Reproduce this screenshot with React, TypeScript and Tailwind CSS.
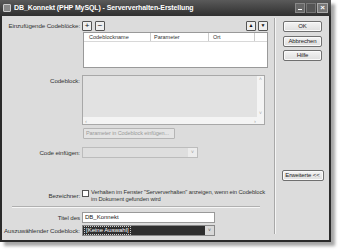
import type { ReactNode } from 'react';

function Btn({ children, className = '' }: { children: ReactNode; className?: string }) {
  return (
    <div
      className={`flex items-center justify-center whitespace-nowrap rounded-[2px] border border-[#6f6f6f] bg-gradient-to-b from-[#f4f4f4] to-[#dedede] text-[6px] tracking-[-0.1px] text-[#222] shadow-[inset_0_0_0_1px_#fafafa] ${className}`}
    >
      {children}
    </div>
  );
}

function Small({ children }: { children: ReactNode }) {
  return (
    <div className="flex h-[10px] w-[10px] items-center justify-center rounded-[1px] border border-[#555] bg-[#eee] text-[8px] leading-none text-[#111]">
      {children}
    </div>
  );
}

function Label({ children, className = '' }: { children: ReactNode; className?: string }) {
  return (
    <div className={`w-[80px] shrink-0 whitespace-nowrap pr-[2px] text-right text-[6.2px] tracking-[-0.1px] text-[#333] ${className}`}>
      {children}
    </div>
  );
}

export default function App() {
  return (
    <div className="h-[250px] w-[338px] bg-white" style={{ fontFamily: '"Liberation Sans", Arial, sans-serif' }}>
      <div className="flex h-[242px] w-[331px] flex-col border-2 border-t-0 border-[#2a2a2a] bg-[#dcdcdc] shadow-[4px_4px_3px_rgba(0,0,0,0.35)]">
        {/* title bar */}
        <div className="-mx-[2px] flex h-[16px] items-center bg-gradient-to-b from-[#5a5a5a] to-[#303030] px-[3px]">
          <div className="mr-[3px] h-[8px] w-[8px] rounded-[1px] border border-[#ccc] bg-[#888]" />
          <div className="flex-1 whitespace-nowrap text-[7px] font-bold tracking-[-0.1px] text-white">
            DB_Konnekt (PHP MySQL) - Serververhalten-Erstellung
          </div>
          <div className="flex gap-[1px]">
            <div className="flex h-[10px] w-[10px] items-end justify-center border border-[#888] bg-[#666] pb-[2px]">
              <div className="h-[1px] w-[4px] bg-white" />
            </div>
            <div className="h-[10px] w-[10px] border border-[#777] bg-[#555]" />
            <div className="flex h-[10px] w-[11px] items-center justify-center border border-[#aaa] bg-[#777] text-[8px] font-bold leading-none text-white">
              ×
            </div>
          </div>
        </div>
        {/* body */}
        <div className="flex flex-1">
          <div className="w-[272px] pt-[4px]">
            <div className="flex h-[11px] items-center">
              <Label>Einzufügende Codeblöcke:</Label>
              <div className="flex gap-[3px]">
                <Small>+</Small>
                <Small>−</Small>
              </div>
              <div className="ml-auto mr-[6px] flex gap-[2px]">
                <Small><span className="text-[5px]">▲</span></Small>
                <Small><span className="text-[5px]">▼</span></Small>
              </div>
            </div>
            <div className="ml-[81px] mt-[1px] h-[36px] w-[185px] border border-[#999] bg-white">
              <div className="flex h-[9px] items-center border-b border-[#d8d8d8] whitespace-nowrap text-[5.5px] text-[#333]">
                <div className="w-[67px] border-r border-[#ccc] pl-[5px]">Codeblockname</div>
                <div className="w-[58px] border-r border-[#ccc] pl-[3px]">Parameter</div>
                <div className="w-[46px] border-r border-[#ccc] pl-[4px]">Ort</div>
              </div>
            </div>
            <div className="mt-[7px] flex">
              <Label className="pt-[1px]">Codeblock:</Label>
              <div className="flex h-[50px] w-[183px] flex-col border border-[#a8a8a8] bg-[#e2e2e2]">
                <div className="flex flex-1">
                  <div className="flex-1" />
                  <div className="flex w-[7px] flex-col justify-between bg-[#f4f4f4] text-center text-[5px] text-[#aaa]">
                    <span>˄</span>
                    <span>˅</span>
                  </div>
                </div>
                <div className="flex h-[7px] items-center justify-between bg-[#f4f4f4] px-[2px] text-[6px] leading-none text-[#aaa]">
                  <span>‹</span>
                  <span className="mr-[6px]">›</span>
                </div>
              </div>
            </div>
            <div className="ml-[81px] mt-[3px] flex h-[11px] w-[92px] items-center whitespace-nowrap rounded-[1px] border border-[#b5b5b5] bg-[#e4e4e4] pl-[2px] text-[5.5px] tracking-[-0.1px] text-[#9a9a9a]">
              Parameter in Codeblock einfügen...
            </div>
            <div className="mt-[8px] flex h-[11px] items-center">
              <Label>Code einfügen:</Label>
              <div className="flex h-[11px] w-[116px] justify-end border border-[#bcbcbc] bg-[#dedede]">
                <div className="flex w-[9px] items-center justify-center bg-[#ececec] text-[5px] text-[#999]">˅</div>
              </div>
            </div>
            <div className="mt-[31px] flex items-center">
              <Label>Bezeichner:</Label>
              <div className="flex items-start gap-[2px]">
                <div className="mt-[1px] h-[7px] w-[7px] shrink-0 border border-[#555] bg-white" />
                <div className="whitespace-nowrap text-[5.8px] leading-[7px] tracking-[-0.1px] text-[#333]">
                  Verhalten im Fenster "Serververhalten" anzeigen, wenn ein Codeblock
                  <br />
                  im Dokument gefunden wird
                </div>
              </div>
            </div>
            <div className="ml-[10px] mt-[3px] h-[2px] w-[248px] border-t border-b border-t-[#b0b0b0] border-b-[#f6f6f6]" />
            <div className="mt-[4px] flex h-[11px] items-center">
              <Label>Titel des</Label>
              <div className="flex h-[11px] w-[133px] items-center border border-[#999] bg-white pl-[2px] text-[6px] text-[#222]">
                DB_Konnekt
              </div>
            </div>
            <div className="mt-[2px] flex h-[11px] items-center">
              <Label>Auszuwählender Codeblock:</Label>
              <div className="flex h-[11px] w-[133px] items-center border border-[#888] bg-[#2e2e2e]">
                <span className="ml-[1px] whitespace-nowrap border border-dotted border-[#ccc] px-[1px] text-[6px] leading-[7px] text-white">
                  [Keine Auswahl]
                </span>
                <div className="ml-auto flex h-full w-[9px] items-center justify-center bg-[#d8d8d8] text-[5px] text-[#555]">˅</div>
              </div>
            </div>
          </div>
          <div className="mb-[6px] mt-[2px] w-[2px] border-l border-r border-l-[#a8a8a8] border-r-[#f4f4f4]" />
          <div className="flex flex-1 flex-col items-center pt-[5px]">
            <Btn className="h-[11px] w-[39px]">OK</Btn>
            <Btn className="mt-[4px] h-[11px] w-[39px]">Abbrechen</Btn>
            <Btn className="mt-[3px] h-[11px] w-[39px]">Hilfe</Btn>
            <Btn className="mt-[109px] h-[11px] w-[42px]">Erweiterte &lt;&lt;</Btn>
          </div>
        </div>
      </div>
    </div>
  );
}
